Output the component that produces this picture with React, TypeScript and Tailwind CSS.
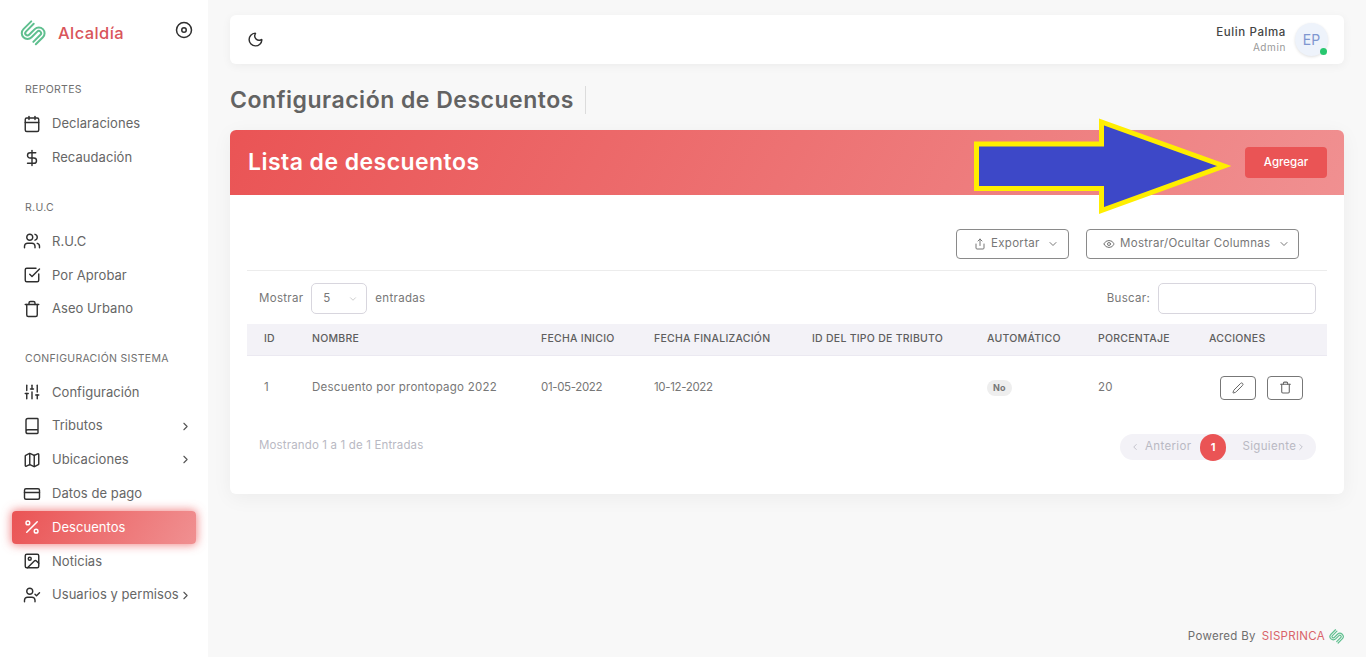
import React from "react";
import { Calendar, DollarSign, Users, CheckSquare, Trash, Sliders, Book, Map, CreditCard, Percent, Image, UserCheck, ChevronRight, ChevronLeft, ChevronDown, Moon, Share, Eye, Edit2 } from "lucide-react";

function Logo({ size }: { size: number }) {
  return (
    <svg width={size} height={size} viewBox="0 0 26 26" fill="none" stroke="#5fbf8f" strokeWidth="2" strokeLinecap="round">
      <g transform="rotate(-45 13 13)">
        <path d="M20 3.5 H9 A5.75 5.75 0 0 0 9 15 H17 A2.25 2.25 0 0 1 17 19.5 H7" />
        <path d="M20 7 H9 A2.25 2.25 0 0 0 9 11.5 H17 A5.75 5.75 0 0 1 17 23 H7" />
      </g>
    </svg>
  );
}

function Item({ icon: I, label, chevron, active }: { icon: any; label: string; chevron?: boolean; active?: boolean }) {
  return (
    <div className={active
      ? "mx-3 flex h-[33.8px] items-center rounded-[4px] bg-[linear-gradient(118deg,#ea5455,#f09091)] pl-[11px] text-white shadow-[0_0_10px_1px_rgba(234,84,85,0.7)]"
      : "mx-3 flex h-[33.8px] items-center pl-[11px] text-[#666666]"}>
      <I size={18} strokeWidth={1.9} className={active ? "shrink-0 text-white" : "shrink-0 text-[#2f2f2f]"} />
      <span className="ml-[11px] whitespace-nowrap text-[13px] tracking-[0.05px]">{label}</span>
      {chevron && <ChevronRight size={13} className="ml-auto mr-[4px] shrink-0 text-[#555]" />}
    </div>
  );
}

function Head({ label }: { label: string }) {
  return <div className="flex h-[34px] items-center pl-[25px] text-[10.5px] tracking-[0.3px] text-[#707070]">{label}</div>;
}

const cols = ["ID", "NOMBRE", "FECHA INICIO", "FECHA FINALIZACIÓN", "ID DEL TIPO DE TRIBUTO", "AUTOMÁTICO", "PORCENTAJE", "ACCIONES"];
const widths = ["w-[65px]", "w-[229px]", "w-[113px]", "w-[158px]", "w-[175px]", "w-[111px]", "w-[111px]", "w-[118px]"];

export default function App() {
  return (
    <div className="relative flex h-[657px] w-[1366px] overflow-hidden bg-[#f8f8f8] font-[Inter,sans-serif]">
      <aside className="w-[208px] shrink-0 bg-white">
        <div className="relative flex h-[66px] items-center pl-[20px]">
          <Logo size={26} />
          <span className="ml-[12px] text-[16.5px] font-medium tracking-[0.4px] text-[#d9555a]">Alcaldía</span>
          <svg className="absolute left-[175px] top-[21px] text-[#2f2f2f]" width="18" height="18" viewBox="0 0 24 24" fill="none" stroke="currentColor" strokeWidth="2">
            <circle cx="12" cy="12" r="10" />
            <circle cx="12" cy="12" r="3" />
          </svg>
        </div>
        <div className="mt-[7px]">
          <Head label="REPORTES" />
          <Item icon={Calendar} label="Declaraciones" />
          <Item icon={DollarSign} label="Recaudación" />
        </div>
        <div className="mt-[16px]">
          <Head label="R.U.C" />
          <Item icon={Users} label="R.U.C" />
          <Item icon={CheckSquare} label="Por Aprobar" />
          <Item icon={Trash} label="Aseo Urbano" />
        </div>
        <div className="mt-[15.4px]">
          <Head label="CONFIGURACIÓN SISTEMA" />
          <Item icon={Sliders} label="Configuración" />
          <Item icon={Book} label="Tributos" chevron />
          <Item icon={Map} label="Ubicaciones" chevron />
          <Item icon={CreditCard} label="Datos de pago" />
          <Item icon={Percent} label="Descuentos" active />
          <Item icon={Image} label="Noticias" />
          <Item icon={UserCheck} label="Usuarios y permisos" chevron />
        </div>
      </aside>

      <main className="flex min-w-0 flex-1 flex-col px-[22px] pt-[15px]">
        <header className="flex h-[49px] items-center justify-between rounded-[6px] bg-white pl-[17px] pr-[16px] shadow-[0_2px_10px_rgba(0,0,0,0.05)]">
          <Moon size={17} strokeWidth={2} className="text-[#2f2f2f]" />
          <div className="flex items-center">
            <div className="mr-[9px] text-right">
              <div className="text-[11.5px] font-medium leading-[15px] tracking-[0.6px] text-[#444]">Eulin Palma</div>
              <div className="text-[10px] leading-[14px] tracking-[0.6px] text-[#999]">Admin</div>
            </div>
            <div className="relative flex h-[33px] w-[33px] items-center justify-center rounded-full bg-[#eef3fb] text-[14px] text-[#7f97d0] shadow-[0_1px_3px_rgba(0,0,0,0.12)]">
              EP
              <span className="absolute bottom-[1px] right-[1px] h-[7px] w-[7px] rounded-full bg-[#28c76f]" />
            </div>
          </div>
        </header>

        <div className="mt-[22px] flex h-[28px] items-center">
          <h1 className="border-r border-[#dcdcdc] pr-[11px] text-[23px] font-semibold leading-[28px] tracking-[0.5px] text-[#636363]">Configuración de Descuentos</h1>
        </div>

        <section className="mt-[16px] h-[364px] rounded-[6px] bg-white shadow-[0_4px_20px_rgba(0,0,0,0.05)]">
          <div className="flex h-[65px] items-center justify-between rounded-t-[6px] bg-[linear-gradient(118deg,#ea5455,#f09091)] pl-[18px] pr-[17px]">
            <h2 className="text-[23px] font-semibold tracking-[0.45px] text-white">Lista de descuentos</h2>
            <button className="h-[31px] w-[82px] rounded-[4px] bg-[#ea5455] text-[11.5px] font-medium text-white">Agregar</button>
          </div>

          <div className="px-[17px]">
            <div className="flex h-[76px] items-start justify-end border-b border-[#ececec] pt-[34px] pr-[28px]">
              <button className="flex h-[30px] w-[113px] items-center rounded-[4px] border border-[#8a8a8a] pl-[17px] text-[11.5px] tracking-[0.3px] text-[#777777]">
                <Share size={12} className="mr-[5px]" />Exportar<ChevronDown size={12} className="ml-auto mr-[9px]" />
              </button>
              <button className="ml-[17px] flex h-[30px] w-[213px] items-center rounded-[4px] border border-[#8a8a8a] pl-[16px] text-[11.5px] tracking-[0.3px] text-[#777777]">
                <Eye size={12} className="mr-[5px]" />Mostrar/Ocultar Columnas<ChevronDown size={12} className="ml-auto mr-[8px]" />
              </button>
            </div>

            <div className="flex h-[53px] items-center justify-between pl-[12px] pr-[11px] pt-[2px] text-[11.5px] tracking-[0.3px] text-[#777777]">
              <div className="flex items-center">
                <span>Mostrar</span>
                <div className="ml-[8px] flex h-[31px] w-[56px] items-center rounded-[5px] border border-[#d8d6de] pl-[11px] pr-[8px]">
                  5<ChevronDown size={10} className="ml-auto text-[#c4c4c4]" />
                </div>
                <span className="ml-[8px]">entradas</span>
              </div>
              <div className="flex items-center">
                <span>Buscar:</span>
                <input aria-label="Buscar" className="ml-[8px] h-[31px] w-[158px] rounded-[5px] border border-[#d8d6de] bg-white" />
              </div>
            </div>

            <table className="w-[1080px] table-fixed border-collapse">
              <thead>
                <tr className="h-[31px] border-b border-[#ebe9f1] bg-[#f3f2f7]">
                  {cols.map((c, i) => (
                    <th key={c} className={`${widths[i]} p-0 text-left text-[10.5px] font-medium tracking-[0.25px] text-[#5e5e5e] ${i === 0 ? "pl-[17px]" : ""}`}>{c}</th>
                  ))}
                </tr>
              </thead>
              <tbody>
                <tr className="h-[65px] text-[11.5px] tracking-[0.25px] text-[#777777]">
                  <td className="p-0 pl-[17px]">1</td>
                  <td className="p-0">Descuento por prontopago 2022</td>
                  <td className="p-0 tracking-[-0.35px]">01-05-2022</td>
                  <td className="p-0 tracking-[-0.35px]">10-12-2022</td>
                  <td className="p-0"></td>
                  <td className="p-0"><span className="inline-block rounded-[9px] bg-[#eeeeee] px-[6px] py-[1px] text-[9px] font-bold text-[#777]">No</span></td>
                  <td className="p-0">20</td>
                  <td className="p-0">
                    <div className="flex gap-[11px] pl-[11px]">
                      <button aria-label="Editar" className="flex h-[24px] w-[36px] items-center justify-center rounded-[4px] border border-[#777] text-[#666]"><Edit2 size={12} /></button>
                      <button aria-label="Eliminar" className="flex h-[24px] w-[36px] items-center justify-center rounded-[4px] border border-[#777] text-[#666]"><Trash size={13} /></button>
                    </div>
                  </td>
                </tr>
              </tbody>
            </table>

            <div className="flex items-start justify-between pl-[12px] pr-[11px] pt-[13px]">
              <span className="text-[11.5px] leading-[24px] tracking-[0.15px] text-[#b9b9c3]">Mostrando 1 a 1 de 1 Entradas</span>
              <div className="mt-[1px] flex h-[26px] w-[196px] items-center rounded-full bg-[#f3f2f7] pl-[10px] text-[11.5px] tracking-[0.35px] text-[#b9b9c3]">
                <ChevronLeft size={10} />
                <span className="ml-[5px]">Anterior</span>
                <span className="ml-[9px] flex h-[27px] w-[26px] items-center justify-center rounded-full bg-[#ea5455] text-[11px] font-bold text-white">1</span>
                <span className="ml-[16px]">Siguiente</span>
                <ChevronRight size={10} />
              </div>
            </div>
          </div>
        </section>

        <footer className="mt-auto flex h-[29px] items-start justify-end text-[11.5px] tracking-[0.3px] text-[#6e6e6e]">
          <span>Powered By</span>
          <span className="ml-[6px] text-[#d9636a]">SISPRINCA</span>
          <span className="ml-[4px] mt-[1px]"><Logo size={15} /></span>
        </footer>
      </main>

      <svg className="absolute left-[965px] top-[110px]" width="280" height="115" viewBox="965 110 280 115" aria-hidden="true">
        <polygon points="976.5,144 1101.5,144 1101.5,122 1224,166 1101.5,210.5 1101.5,188.5 976.5,188.5" fill="#3d48c8" stroke="#ffee00" strokeWidth="5" />
      </svg>
    </div>
  );
}
